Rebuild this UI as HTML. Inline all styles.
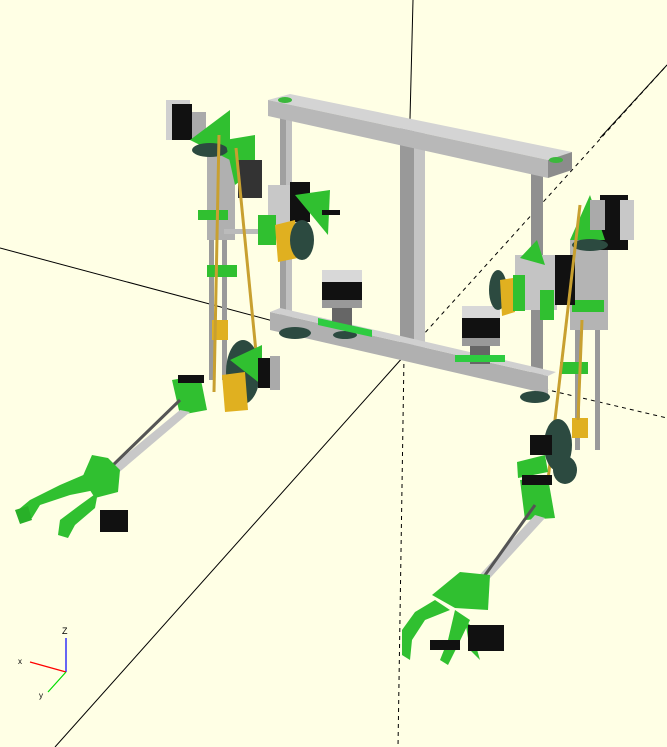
<!DOCTYPE html>
<html><head><meta charset="utf-8"><style>
html,body{margin:0;padding:0;background:#ffffe5;}
svg{display:block;}
text{font-family:"Liberation Sans",sans-serif;}
</style></head><body>
<svg width="667" height="747" viewBox="0 0 667 747" xmlns="http://www.w3.org/2000/svg">
<rect width="667" height="747" fill="#ffffe5"/>
<line x1="413" y1="0" x2="404" y2="356" stroke="#000" stroke-width="1"/>
<line x1="404" y1="356" x2="398" y2="747" stroke="#000" stroke-width="1" stroke-dasharray="4,4"/>
<line x1="0" y1="248" x2="404" y2="356" stroke="#000" stroke-width="1"/>
<line x1="404" y1="356" x2="667" y2="418" stroke="#000" stroke-width="1" stroke-dasharray="4,4"/>
<line x1="55" y1="747" x2="404" y2="356" stroke="#000" stroke-width="1"/>
<line x1="404" y1="356" x2="667" y2="65" stroke="#000" stroke-width="1" stroke-dasharray="4,4"/>
<line x1="600" y1="138" x2="667" y2="65" stroke="#000" stroke-width="1"/>

<rect x="280" y="112" width="12" height="215" fill="#a0a0a0"/>
<rect x="286" y="112" width="6" height="215" fill="#c0c0c0"/>
<rect x="531" y="172" width="12" height="210" fill="#909090"/>
<rect x="400" y="122" width="14" height="232" fill="#999"/>
<rect x="414" y="130" width="11" height="222" fill="#c4c4c4"/>
<polygon points="268,100 290,94 572,152 548,160" fill="#d4d4d4"/>
<polygon points="268,100 548,160 548,178 268,116" fill="#b8b8b8"/>
<polygon points="548,160 572,152 572,170 548,178" fill="#8c8c8c"/>
<ellipse cx="285" cy="100" rx="7" ry="3" fill="#3cb83c"/>
<ellipse cx="556" cy="160" rx="7" ry="3" fill="#3cb83c"/>
<polygon points="270,312 548,376 548,394 270,330" fill="#b0b0b0"/>
<polygon points="270,312 280,308 556,372 548,376" fill="#d0d0d0"/>
<ellipse cx="295" cy="333" rx="16" ry="6" fill="#2c4a40"/>
<ellipse cx="345" cy="335" rx="12" ry="4" fill="#2c4a40"/>
<ellipse cx="535" cy="397" rx="15" ry="6" fill="#2c4a40"/>
<rect x="322" y="270" width="40" height="12" fill="#d8d8d8"/>
<rect x="322" y="282" width="40" height="22" fill="#111"/>
<rect x="322" y="300" width="40" height="8" fill="#999"/>
<rect x="332" y="308" width="20" height="20" fill="#666"/>
<polygon points="318,318 372,330 372,337 318,325" fill="#2ecc40"/>
<rect x="462" y="306" width="38" height="12" fill="#d8d8d8"/>
<rect x="462" y="318" width="38" height="22" fill="#111"/>
<rect x="462" y="338" width="38" height="8" fill="#999"/>
<rect x="470" y="346" width="20" height="18" fill="#666"/>
<rect x="455" y="355" width="50" height="7" fill="#2ecc40"/>

<rect x="207" y="150" width="28" height="90" fill="#b0b0b0"/>
<rect x="222" y="240" width="5" height="140" fill="#9a9a9a"/>
<rect x="209" y="240" width="5" height="140" fill="#9a9a9a"/>
<rect x="166" y="100" width="24" height="40" fill="#d0d0d0"/>
<rect x="172" y="104" width="20" height="36" fill="#111"/>
<rect x="192" y="112" width="14" height="28" fill="#aaa"/>
<polygon points="190,140 230,110 230,160" fill="#30c030"/>
<ellipse cx="210" cy="150" rx="18" ry="7" fill="#2c4a40"/>
<polygon points="225,140 255,135 255,170 235,185" fill="#30c030"/>
<rect x="238" y="160" width="24" height="38" fill="#333"/>
<rect x="198" y="210" width="30" height="10" fill="#30c030"/>
<rect x="207" y="265" width="30" height="12" fill="#30c030"/>
<rect x="212" y="320" width="16" height="20" fill="#e0b020"/>
<rect x="224" y="229" width="60" height="5" fill="#bbb"/>
<rect x="268" y="185" width="30" height="55" fill="#c8c8c8"/>
<rect x="290" y="182" width="20" height="40" fill="#111"/>
<polygon points="295,195 330,190 328,235" fill="#30c030"/>
<rect x="258" y="215" width="18" height="30" fill="#30c030"/>
<polygon points="275,225 295,220 298,258 278,262" fill="#e0b020"/>
<ellipse cx="302" cy="240" rx="12" ry="20" fill="#2c4a40"/>
<rect x="322" y="210" width="18" height="5" fill="#111"/>
<line x1="219" y1="135" x2="214" y2="392" stroke="#c8a030" stroke-width="3"/>
<line x1="236" y1="148" x2="256" y2="352" stroke="#c8a030" stroke-width="3"/>
<ellipse cx="243" cy="372" rx="17" ry="32" fill="#2c4a40"/>
<polygon points="230,360 262,345 262,385" fill="#30c030"/>
<rect x="258" y="358" width="22" height="30" fill="#111"/>
<rect x="270" y="356" width="10" height="34" fill="#aaa"/>
<polygon points="222,375 245,372 248,410 225,412" fill="#e0b020"/>
<polygon points="172,380 200,375 207,410 180,415" fill="#30c030"/>
<rect x="178" y="375" width="26" height="8" fill="#111"/>
<polygon points="180,410 190,412 110,480 100,476" fill="#c8c8c8"/>
<line x1="180" y1="400" x2="110" y2="468" stroke="#555" stroke-width="3"/>
<polygon points="92,455 108,458 120,470 118,492 95,498 82,478" fill="#30c030"/>
<polygon points="95,470 60,485 30,500 18,510 20,520 32,518 40,505 70,495 95,490" fill="#30c030"/>
<polygon points="98,492 80,505 60,520 58,535 68,538 75,525 95,508" fill="#30c030"/>
<rect x="100" y="510" width="28" height="22" fill="#111"/>
<polygon points="15,510 28,506 32,520 20,524" fill="#28b028"/>

<rect x="570" y="240" width="38" height="90" fill="#b4b4b4"/>
<rect x="575" y="330" width="5" height="120" fill="#9a9a9a"/>
<rect x="595" y="330" width="5" height="120" fill="#9a9a9a"/>
<rect x="600" y="195" width="28" height="55" fill="#111"/>
<rect x="620" y="200" width="14" height="40" fill="#c8c8c8"/>
<polygon points="570,240 590,195 605,240" fill="#30c030"/>
<rect x="590" y="200" width="15" height="30" fill="#aaa"/>
<ellipse cx="590" cy="245" rx="18" ry="6" fill="#2c4a40"/>
<rect x="572" y="300" width="32" height="12" fill="#30c030"/>
<rect x="560" y="362" width="28" height="12" fill="#30c030"/>
<rect x="572" y="418" width="16" height="20" fill="#e0b020"/>
<rect x="515" y="255" width="42" height="55" fill="#c4c4c4"/>
<polygon points="520,258 537,240 545,265" fill="#30c030"/>
<rect x="555" y="255" width="20" height="50" fill="#111"/>
<ellipse cx="498" cy="290" rx="9" ry="20" fill="#2c4a40"/>
<polygon points="500,280 513,278 515,312 502,316" fill="#e0b020"/>
<rect x="513" y="275" width="12" height="36" fill="#30c030"/>
<rect x="540" y="290" width="14" height="30" fill="#30c030"/>
<line x1="580" y1="205" x2="548" y2="480" stroke="#c8a030" stroke-width="3"/>
<line x1="582" y1="320" x2="578" y2="420" stroke="#c8a030" stroke-width="3"/>
<ellipse cx="558" cy="445" rx="14" ry="26" fill="#2c4a40"/>
<polygon points="517,462 545,455 548,472 518,478" fill="#30c030"/>
<rect x="530" y="435" width="22" height="20" fill="#111"/>
<ellipse cx="565" cy="470" rx="12" ry="14" fill="#2c4a40"/>
<polygon points="520,480 548,478 555,518 525,520" fill="#30c030"/>
<rect x="522" y="475" width="30" height="10" fill="#111"/>
<polygon points="535,515 545,518 470,600 460,596" fill="#c8c8c8"/>
<line x1="535" y1="505" x2="478" y2="585" stroke="#555" stroke-width="3"/>
<polygon points="460,572 490,575 488,610 455,608 432,595" fill="#30c030"/>
<polygon points="435,600 415,612 402,630 402,655 410,660 412,640 425,620 450,610" fill="#30c030"/>
<polygon points="455,610 448,640 440,660 448,665 458,645 470,620" fill="#30c030"/>
<polygon points="465,620 470,650 480,660 470,625" fill="#30c030"/>
<rect x="468" y="625" width="36" height="26" fill="#111"/>
<rect x="430" y="640" width="30" height="10" fill="#111"/>

<line x1="66" y1="672" x2="66" y2="638" stroke="#0000ff" stroke-width="1.2"/>
<line x1="66" y1="672" x2="30" y2="662" stroke="#ff0000" stroke-width="1.2"/>
<line x1="66" y1="672" x2="48" y2="692" stroke="#00dd00" stroke-width="1.2"/>
<text x="62" y="634" font-size="9" fill="#000">Z</text>
<text x="18" y="664" font-size="8" fill="#000">x</text>
<text x="39" y="698" font-size="8" fill="#000">y</text>
</svg>
</body></html>
